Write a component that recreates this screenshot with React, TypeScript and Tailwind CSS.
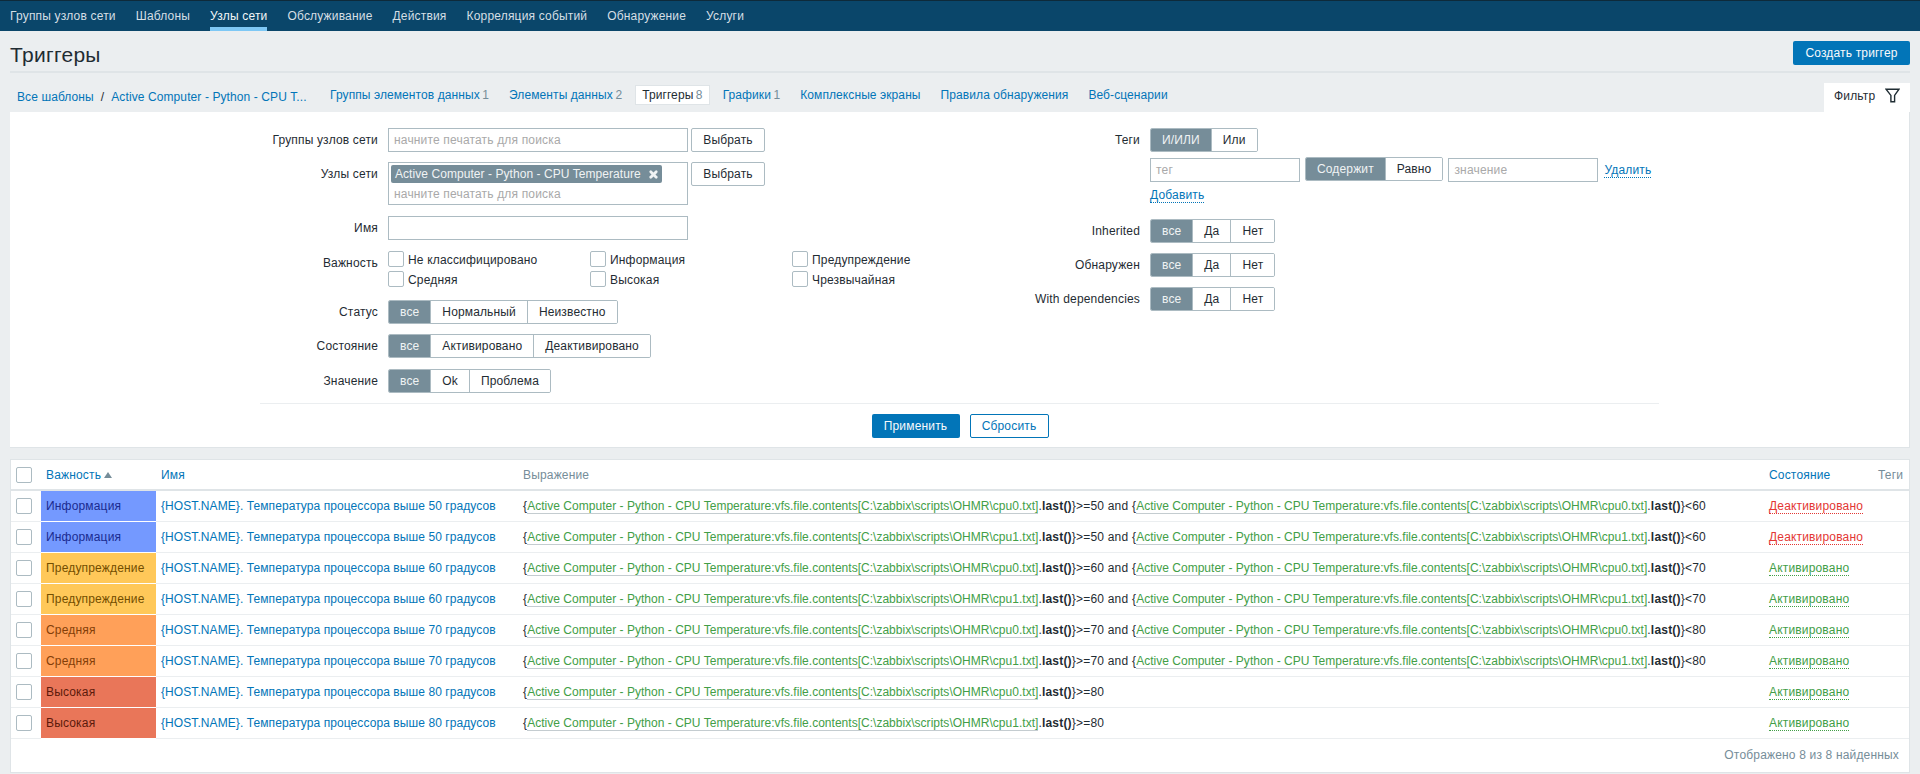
import { ReactNode } from "react";
import { X } from "lucide-react";

const navItems = [
  "Группы узлов сети",
  "Шаблоны",
  "Узлы сети",
  "Обслуживание",
  "Действия",
  "Корреляция событий",
  "Обнаружение",
  "Услуги",
];

const tabs: { name: string; count?: number; active?: boolean }[] = [
  { name: "Группы элементов данных", count: 1 },
  { name: "Элементы данных", count: 2 },
  { name: "Триггеры", count: 8, active: true },
  { name: "Графики", count: 1 },
  { name: "Комплексные экраны" },
  { name: "Правила обнаружения" },
  { name: "Веб-сценарии" },
];

const severities: Record<string, { bg: string; text: string }> = {
  Информация: { bg: "bg-[#7499ff]", text: "text-[#1a2b90]" },
  Предупреждение: { bg: "bg-[#ffc859]", text: "text-[#734e00]" },
  Средняя: { bg: "bg-[#ffa059]", text: "text-[#843e08]" },
  Высокая: { bg: "bg-[#e97659]", text: "text-[#5c1a0b]" },
};

const triggers = [
  { severity: "Информация", temp: 50, cpu: 0, limit: 60, enabled: false },
  { severity: "Информация", temp: 50, cpu: 1, limit: 60, enabled: false },
  { severity: "Предупреждение", temp: 60, cpu: 0, limit: 70, enabled: true },
  { severity: "Предупреждение", temp: 60, cpu: 1, limit: 70, enabled: true },
  { severity: "Средняя", temp: 70, cpu: 0, limit: 80, enabled: true },
  { severity: "Средняя", temp: 70, cpu: 1, limit: 80, enabled: true },
  { severity: "Высокая", temp: 80, cpu: 0, enabled: true },
  { severity: "Высокая", temp: 80, cpu: 1, enabled: true },
];

const Segmented = ({ items }: { items: string[] }) => (
  <div className="flex h-[24px] overflow-hidden rounded-[2px] border border-[#acbbc2] tracking-[0.14px]">
    {items.map((item, i) => (
      <span
        key={item}
        className={
          i === 0
            ? "flex items-center bg-[#768d99] px-[11px] text-[#f0f3f4]"
            : "flex items-center border-l border-[#acbbc2] bg-white px-[11px] text-[#1f2c33]"
        }
      >
        {item}
      </span>
    ))}
  </div>
);

const TextBox = ({ placeholder, className }: { placeholder?: string; className: string }) => (
  <div className={`flex h-[24px] items-center border border-[#acbbc2] bg-white px-[5px] text-[#a9a9a9] ${className}`}>
    {placeholder}
  </div>
);

const ChooseButton = () => (
  <button className="ml-[3px] h-[24px] w-[74px] rounded-[2px] border border-[#acbbc2] bg-white text-[#1f2c33]">
    Выбрать
  </button>
);

const Row = ({ label, className, labelWidth, children }: { label: string; className?: string; labelWidth: string; children: ReactNode }) => (
  <div className={`flex items-start ${className ?? ""}`}>
    <div className={`flex h-[24px] shrink-0 items-center justify-end pr-[10px] text-[#1f2c33] ${labelWidth}`}>{label}</div>
    {children}
  </div>
);

const Check = ({ label }: { label: string }) => (
  <div className="flex h-[16px] items-center">
    <span className="h-[16px] w-[16px] shrink-0 rounded-[2px] border border-[#acbbc2] bg-white" />
    <span className="ml-[4px] pt-[1px] text-[#1f2c33]">{label}</span>
  </div>
);

const Expression = ({ temp, cpu, limit }: { temp: number; cpu: number; limit?: number }) => {
  const part = (op: string, value: number) => (
    <>
      {"{"}
      <span className="border-b border-[#c4ccd0] tracking-[0.02px] text-[#429e47]">
        Active Computer - Python - CPU Temperature:vfs.file.contents[C:\zabbix\scripts\OHMR\cpu{cpu}.txt]
      </span>
      .<b>last()</b>
      {"}"}
      {op}
      {value}
    </>
  );
  return (
    <span className="tracking-[0.2px]">
      {part(">=", temp)}
      {limit !== undefined && <> and {part("<", limit)}</>}
    </span>
  );
};

export default function App() {
  const lw = "w-[128px]";
  const rw = "w-[189px]";
  return (
    <div className="min-h-[774px] bg-[#ebeef0] font-[Liberation_Sans,Arial,sans-serif] text-[12px] leading-[14px] tracking-[0.17px] text-[#1f2c33]">
      <nav className="flex h-[31px] border-t border-[#0e2a3a] bg-[#0a466a] px-[10px]">
        {navItems.map((item, i) => (
          <a
            key={item}
            className={
              i === 2
                ? "mr-[20px] flex h-[30px] items-center border-b-[4px] border-[#7ec8f5] pt-[3px] tracking-[0.18px] text-[#f2f6f8]"
                : "mr-[20px] flex h-[30px] items-center border-b-[4px] border-transparent pt-[3px] tracking-[0.18px] text-[#d5dfe5]"
            }
          >
            {item}
          </a>
        ))}
      </nav>

      <header className="mx-[10px] flex h-[42px] items-end justify-between border-b-2 border-[#dfe4e7] pb-[6px]">
        <h1 className="-mb-[2px] text-[21px] leading-[24px] tracking-[0.3px] text-[#1f2c33]">Триггеры</h1>
        <button className="h-[24px] w-[117px] rounded-[2px] bg-[#0275b8] text-[#f7fafc]">Создать триггер</button>
      </header>

      <div className="mx-[10px] flex h-[39px] items-end justify-between">
        <div className="flex h-[29px] items-start pt-[2px] tracking-[0.09px]">
          <div className="flex h-[22px] w-[313px] items-center pl-[7px] pt-[1px] tracking-[0.1px] text-[#0275b8]">
            <a>Все шаблоны</a>
            <span className="mx-[7px] text-[#1f2c33]">/</span>
            <a>Active Computer - Python - CPU T...</a>
          </div>
          {tabs.map((tab) => (
            <a
              key={tab.name}
              className={
                tab.active
                  ? "mr-[6px] flex h-[20px] items-center border border-[#dfe4e7] bg-white px-[6px] text-[#1f2c33]"
                  : "mr-[6px] flex h-[20px] items-center px-[7px] text-[#0275b8]"
              }
            >
              {tab.name}
              {tab.count !== undefined && <span className="ml-[2.5px] text-[#768d99]">{tab.count}</span>}
            </a>
          ))}
        </div>
        <div className="flex h-[29px] w-[86px] items-center bg-white pb-[4px] pl-[10px] text-[#1f2c33]">
          Фильтр
          <svg className="ml-[10px]" width="15" height="15" viewBox="0 0 15 15" fill="none" stroke="#1f2c33" strokeWidth="1.4">
            <path d="M1 1.2h13L9.6 7.4v6.4H5.9V7.4Z" />
          </svg>
        </div>
      </div>

      <section className="mx-[10px] h-[336px] border-b border-r border-[#dfe4e7] bg-white pt-[16px]">
        <div className="flex pl-[250px]">
          <div className="w-[701px]">
            <Row label="Группы узлов сети" labelWidth={lw}>
              <TextBox placeholder="начните печатать для поиска" className="w-[300px]" />
              <ChooseButton />
            </Row>
            <Row label="Узлы сети" labelWidth={lw} className="mt-[10px]">
              <div className="h-[43px] w-[300px] border border-[#acbbc2] bg-white">
                <div className="mx-[2px] mt-[2px] flex h-[18px] w-[271px] items-center justify-between whitespace-nowrap rounded-[2px] bg-[#768d99] pl-[4px] pr-[3px] tracking-[0.06px] text-[#f0f3f4]">
                  Active Computer - Python - CPU Temperature
                  <X size={11} strokeWidth={6} />
                </div>
                <div className="mt-[4px] pl-[5px] text-[#a9a9a9]">начните печатать для поиска</div>
              </div>
              <ChooseButton />
            </Row>
            <Row label="Имя" labelWidth={lw} className="mt-[11px]">
              <TextBox className="w-[300px]" />
            </Row>
            <Row label="Важность" labelWidth={lw} className="mt-[11px]">
              <div className="grid w-[606px] grid-cols-[202px_202px_202px] gap-y-[4px]">
                <Check label="Не классифицировано" />
                <Check label="Информация" />
                <Check label="Предупреждение" />
                <Check label="Средняя" />
                <Check label="Высокая" />
                <Check label="Чрезвычайная" />
              </div>
            </Row>
            <Row label="Статус" labelWidth={lw} className="mt-[13px]">
              <Segmented items={["все", "Нормальный", "Неизвестно"]} />
            </Row>
            <Row label="Состояние" labelWidth={lw} className="mt-[10px]">
              <Segmented items={["все", "Активировано", "Деактивировано"]} />
            </Row>
            <Row label="Значение" labelWidth={lw} className="mt-[11px]">
              <Segmented items={["все", "Ok", "Проблема"]} />
            </Row>
          </div>
          <div>
            <Row label="Теги" labelWidth={rw}>
              <Segmented items={["И/ИЛИ", "Или"]} />
            </Row>
            <div className="ml-[189px] mt-[5px] flex items-start">
              <TextBox placeholder="тег" className="mt-[1px] w-[150px]" />
              <div className="ml-[5px]">
                <Segmented items={["Содержит", "Равно"]} />
              </div>
              <TextBox placeholder="значение" className="ml-[5px] mt-[1px] w-[150px]" />
              <a className="ml-[6px] mt-[6px] border-b border-dotted border-[#0275b8] text-[#0275b8]">Удалить</a>
            </div>
            <div className="ml-[189px] mt-[4px] flex h-[18px] items-center">
              <a className="border-b border-dotted border-[#0275b8] text-[#0275b8]">Добавить</a>
            </div>
            <Row label="Inherited" labelWidth={rw} className="mt-[15px]">
              <Segmented items={["все", "Да", "Нет"]} />
            </Row>
            <Row label="Обнаружен" labelWidth={rw} className="mt-[10px]">
              <Segmented items={["все", "Да", "Нет"]} />
            </Row>
            <Row label="With dependencies" labelWidth={rw} className="mt-[10px]">
              <Segmented items={["все", "Да", "Нет"]} />
            </Row>
          </div>
        </div>
        <div className="mx-[250px] mt-[10px] border-t border-[#ebeef0]" />
        <div className="mt-[10px] flex justify-center pl-[1px]">
          <button className="h-[24px] w-[88px] rounded-[2px] bg-[#0275b8] text-[#f7fafc]">Применить</button>
          <button className="ml-[10px] h-[24px] w-[79px] rounded-[2px] border border-[#0275b8] bg-white text-[#0275b8]">
            Сбросить
          </button>
        </div>
      </section>

      <section className="mx-[10px] mt-[11px] border border-[#dfe4e7] bg-white">
        <table className="w-full table-fixed border-collapse">
          <colgroup>
            <col className="w-[30px]" />
            <col className="w-[115px]" />
            <col className="w-[362px]" />
            <col className="w-[1246px]" />
            <col className="w-[109px]" />
            <col />
          </colgroup>
          <thead>
            <tr className="h-[30px] border-b-2 border-[#dfe4e7]">
              <th className="pl-[5px] text-left font-normal">
                <span className="block h-[16px] w-[16px] rounded-[2px] border border-[#acbbc2]" />
              </th>
              <th className="pl-[5px] text-left font-normal text-[#0275b8]">
                <span className="flex items-center">
                  Важность
                  <svg className="ml-[3px]" width="8" height="6" viewBox="0 0 8 6" fill="#768d99">
                    <path d="M4 0l4 6H0Z" />
                  </svg>
                </span>
              </th>
              <th className="pl-[5px] text-left font-normal text-[#0275b8]">Имя</th>
              <th className="pl-[5px] text-left font-normal text-[#768d99]">Выражение</th>
              <th className="pl-[5px] text-left font-normal text-[#0275b8]">Состояние</th>
              <th className="pl-[5px] text-left font-normal text-[#768d99]">Теги</th>
            </tr>
          </thead>
          <tbody>
            {triggers.map((t, i) => {
              const severity = severities[t.severity];
              return (
                <tr key={i} className="h-[31px] border-b border-[#ebeef0]">
                  <td className="pl-[5px]">
                    <span className="block h-[16px] w-[16px] rounded-[2px] border border-[#acbbc2]" />
                  </td>
                  <td className={`border-b border-white pl-[5px] ${severity.bg} ${severity.text}`}>{t.severity}</td>
                  <td className="pl-[5px] tracking-[0.08px] text-[#0275b8]">
                    {"{HOST.NAME}"}. Температура процессора выше {t.temp} градусов
                  </td>
                  <td className="pl-[5px]">
                    <Expression temp={t.temp} cpu={t.cpu} limit={t.limit} />
                  </td>
                  <td className="pl-[5px]">
                    <a
                      className={
                        t.enabled
                          ? "border-b border-dotted border-[#429e47] text-[#429e47]"
                          : "border-b border-dotted border-[#e33734] text-[#e33734]"
                      }
                    >
                      {t.enabled ? "Активировано" : "Деактивировано"}
                    </a>
                  </td>
                  <td />
                </tr>
              );
            })}
          </tbody>
        </table>
        <div className="flex h-[33px] items-center justify-end pr-[10px] text-[#768d99]">
          Отображено 8 из 8 найденных
        </div>
      </section>
    </div>
  );
}
